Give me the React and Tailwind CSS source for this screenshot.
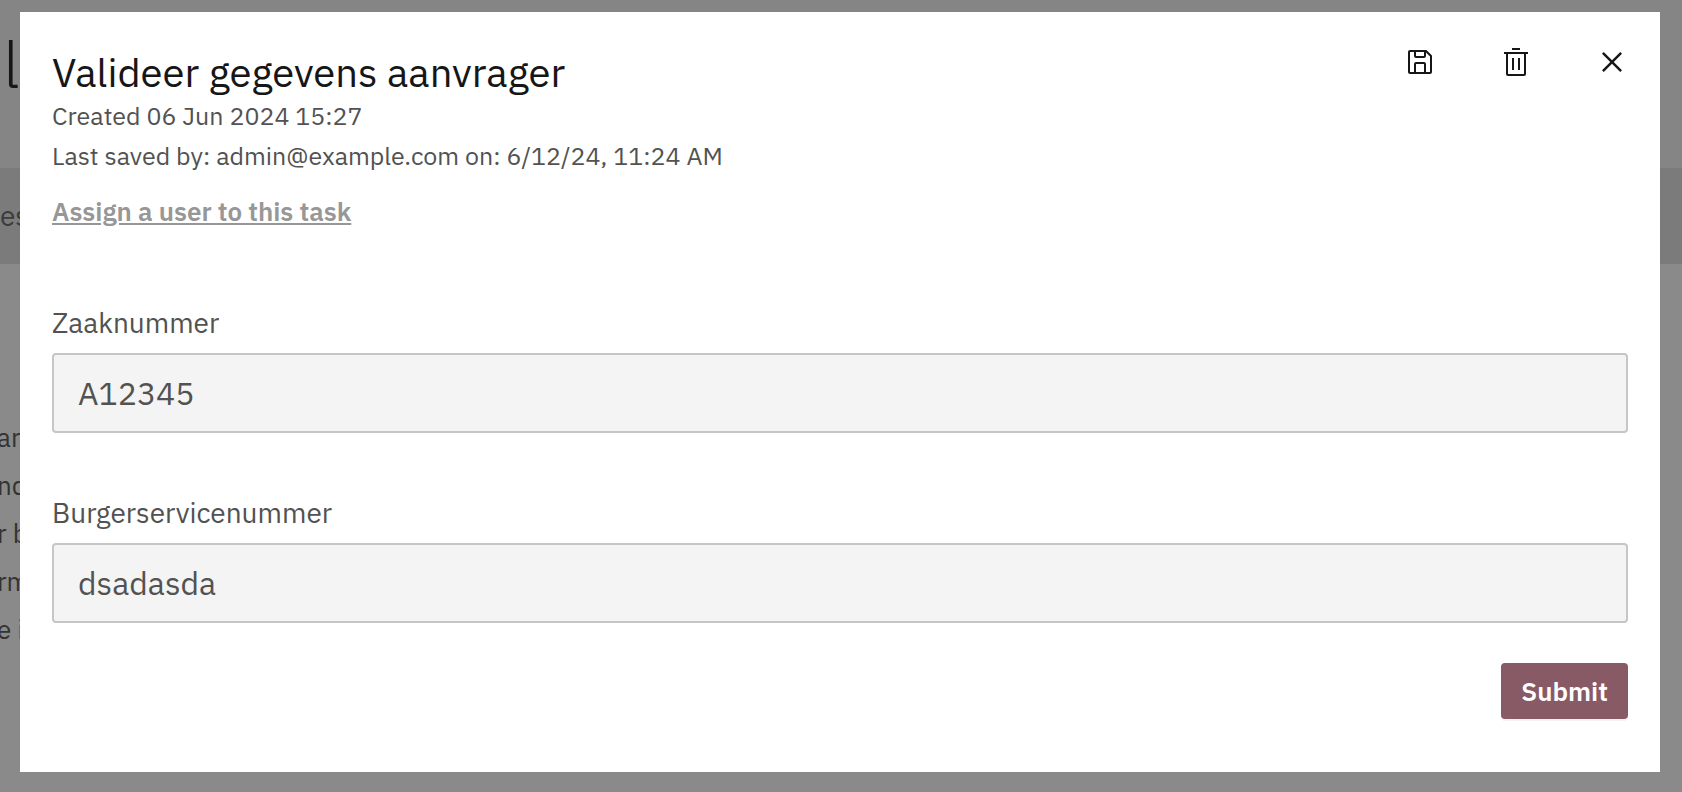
const PAGE_LINES = ['ar', 'nd', 'r b', 'rm', 'e i'];

function SaveIcon() {
  return (
    <svg viewBox="0 0 32 32" className="size-8" fill="currentColor" aria-hidden="true">
      <path d="M27.71,9.29l-5-5A1,1,0,0,0,22,4H6A2,2,0,0,0,4,6V26a2,2,0,0,0,2,2H26a2,2,0,0,0,2-2V10A1,1,0,0,0,27.71,9.29ZM12,6h8v4H12Zm8,20H12V18h8Zm2,0V18a2,2,0,0,0-2-2H12a2,2,0,0,0-2,2v8H6V6h4v4a2,2,0,0,0,2,2h8a2,2,0,0,0,2-2V6.41l4,4V26Z" />
    </svg>
  );
}

function TrashIcon() {
  return (
    <svg viewBox="0 0 32 32" className="size-8" fill="currentColor" aria-hidden="true">
      <path d="M12 12H14V24H12zM18 12H20V24H18z" />
      <path d="M4 6V8H6V28a2 2 0 0 0 2 2H24a2 2 0 0 0 2-2V8h2V6zM8 28V8H24V28zM12 2H20V4H12z" />
    </svg>
  );
}

function CloseIcon() {
  return (
    <svg viewBox="0 0 32 32" className="size-10" fill="currentColor" aria-hidden="true">
      <path d="M24 9.4 22.6 8 16 14.6 9.4 8 8 9.4 14.6 16 8 22.6 9.4 24 16 17.4 22.6 24 24 22.6 17.4 16z" />
    </svg>
  );
}

function IconButton({ label, children }) {
  return (
    <button type="button" aria-label={label} className="flex h-25 w-24 items-center justify-center">
      {children}
    </button>
  );
}

function Field({ id, label, value }) {
  return (
    <div className="flex flex-col gap-[10px]">
      <label htmlFor={id} className="text-[28px] leading-10 text-[#525252]">
        {label}
      </label>
      <input
        id={id}
        defaultValue={value}
        readOnly
        className="h-20 w-full rounded-[4px] border-2 border-[#c6c6c6] bg-[#f4f4f4] px-6 text-[32px] text-[#525252] outline-none"
      />
    </div>
  );
}

function BackgroundPage() {
  return (
    <div className="absolute inset-0 flex flex-col overflow-hidden bg-[#8a8a8a]" aria-hidden="true">
      <div className="h-42 bg-[#858585] pt-6 pl-[3px] text-[64px] leading-20 font-light text-[#161616]">l</div>
      <div className="flex h-24 items-center bg-[#7b7b7b] text-[28px] text-[#3c3c3c]">es</div>
      <div className="-ml-[3px] pt-[149px] text-[26px] leading-12 text-[#333333]">
        {PAGE_LINES.map((line) => (
          <p key={line} className="whitespace-nowrap">{line}</p>
        ))}
      </div>
    </div>
  );
}

export default function App() {
  return (
    <div className="relative min-h-screen font-['IBM_Plex_Sans','Noto_Sans',sans-serif]">
      <BackgroundPage />
      <div className="relative flex min-h-screen flex-col px-5 pt-3 pb-5 sm:pr-[22px]">
        <section role="dialog" aria-modal="true" aria-labelledby="task-title" className="flex grow flex-col bg-white">
          <header className="flex items-start justify-between">
            <div className="pt-9 pl-8">
              <h1 id="task-title" className="text-[40px] leading-12 text-[#161616]">
                Valideer gegevens aanvrager
              </h1>
              <p className="text-[25px] leading-10 text-[#525252]">Created 06 Jun 2024 15:27</p>
              <p className="text-[25px] leading-10 text-[#525252]">
                Last saved by: admin@example.com on: 6/12/24, 11:24 AM
              </p>
              <a href="#assign" className="mt-[15px] block w-fit text-[26px] leading-10 font-semibold text-[#979797] underline">
                Assign a user to this task
              </a>
            </div>
            <div className="flex text-[#161616]">
              <IconButton label="Save"><SaveIcon /></IconButton>
              <IconButton label="Delete"><TrashIcon /></IconButton>
              <IconButton label="Close"><CloseIcon /></IconButton>
            </div>
          </header>
          <form className="flex flex-col px-8 pt-18" onSubmit={(e) => e.preventDefault()}>
            <div className="flex flex-col gap-15">
              <Field id="case-number" label="Zaaknummer" value="A12345" />
              <Field id="citizen-number" label="Burgerservicenummer" value="dsadasda" />
            </div>
            <button
              type="submit"
              className="mt-10 h-14 self-end rounded-[4px] bg-[#885a66] px-5 text-[26px] font-semibold text-white shadow-[0_2px_0_#f3f3f3]"
            >
              Submit
            </button>
          </form>
        </section>
      </div>
    </div>
  );
}
